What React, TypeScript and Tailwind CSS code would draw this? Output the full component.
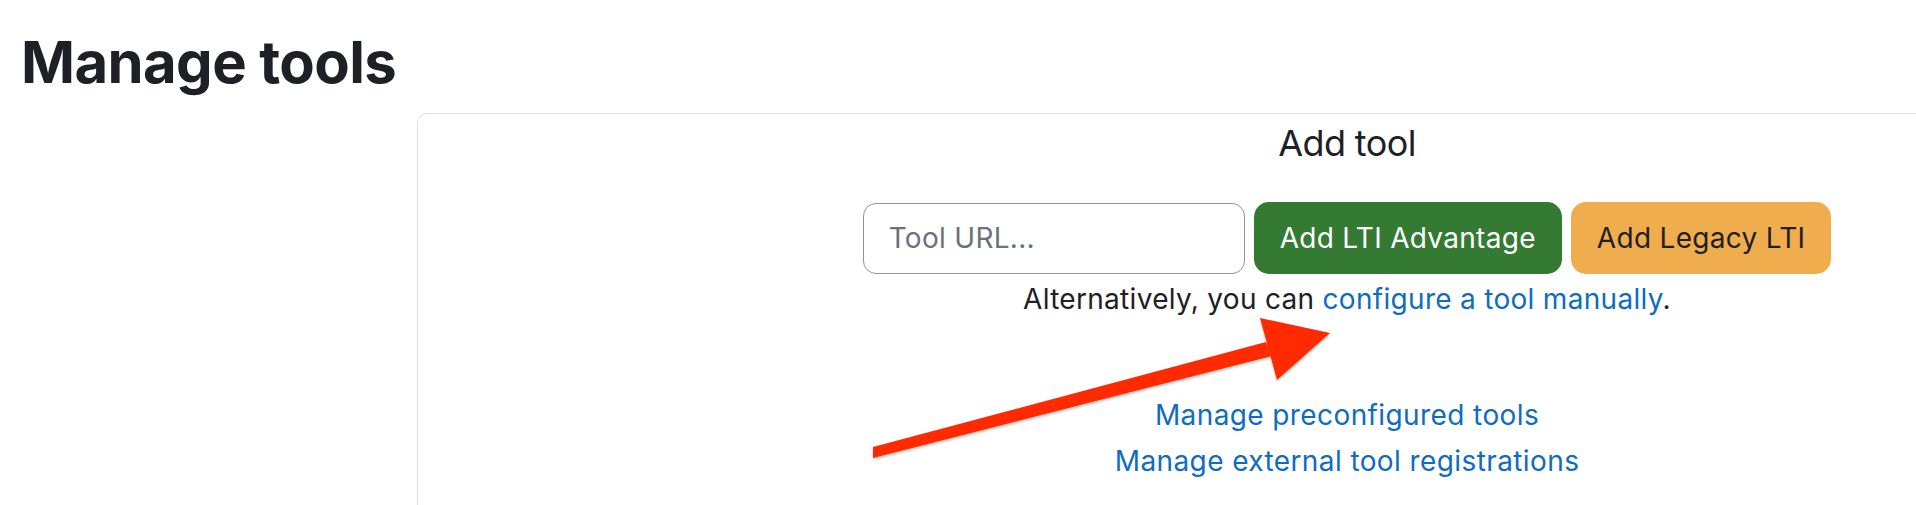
import React from "react";

export default function App() {
  return (
    <div className="relative w-[1916px] h-[505px] overflow-hidden bg-white font-['Inter','Liberation_Sans',sans-serif] text-[#1d2125]">
      <h1 className="pl-[21px] pt-[27px] text-[58px] leading-[70px] font-bold tracking-[-0.6px]">
        Manage tools
      </h1>
      <div className="ml-[417px] mt-[16px] w-[1860px] h-[420px] border border-[#dee2e6] rounded-[10px] pt-[7px] flex flex-col items-center">
        <h3 className="text-[36px] leading-[44px] font-normal tracking-[-0.6px]">Add tool</h3>
        <div className="mt-[37px] flex items-center gap-[9px] tracking-[0.3px]">
          <input
            type="text"
            placeholder="Tool URL..."
            className="w-[382px] h-[71px] border border-[#8f959e] rounded-[13px] pl-[25px] text-[28px] tracking-[0.3px] placeholder:text-[#6a737b] outline-none"
          />
          <button className="h-[72px] px-[26px] rounded-[15px] bg-[#357a32] text-white text-[28px]">
            Add LTI Advantage
          </button>
          <button className="h-[72px] px-[26px] rounded-[15px] bg-[#f0ad4e] text-[#1d2125] text-[28px]">
            Add Legacy LTI
          </button>
        </div>
        <p className="mt-[7px] text-[28px] leading-[36px] tracking-[0.3px]">
          Alternatively, you can{" "}
          <a href="#" className="text-[#0f6cbf]">
            configure a tool manually
          </a>
          .
        </p>
        <div className="mt-[75px] flex flex-col items-center text-[28px] leading-[46px] tracking-[0.4px]">
          <a href="#" className="text-[#0f6cbf]">
            Manage preconfigured tools
          </a>
          <a href="#" className="text-[#0f6cbf]">
            Manage external tool registrations
          </a>
        </div>
      </div>
      <svg
        className="absolute left-0 top-0 pointer-events-none"
        width="1916"
        height="505"
        viewBox="0 0 1916 505"
      >
        <defs>
          <filter id="sh" x="-10%" y="-10%" width="120%" height="130%">
            <feDropShadow dx="0" dy="1.5" stdDeviation="1.2" floodColor="#000" floodOpacity="0.25" />
          </filter>
        </defs>
        <g filter="url(#sh)" fill="#ff2a00">
          <polygon points="873,447 873,458 1272,356 1266,342" />
          <polygon points="1260,318 1330,333 1277,380" />
        </g>
      </svg>
    </div>
  );
}
